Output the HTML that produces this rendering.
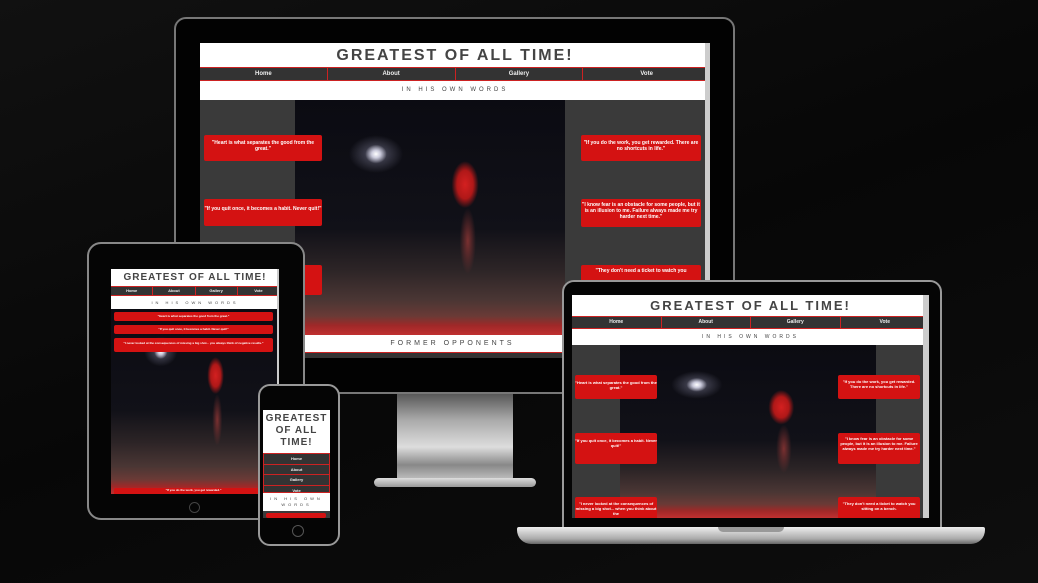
<!DOCTYPE html>
<html><head><meta charset="utf-8"><style>
*{margin:0;padding:0;box-sizing:border-box}
body{width:1038px;height:583px;background:#0b0b0c;position:relative;overflow:hidden;font-family:"Liberation Sans",sans-serif}
.a{position:absolute}
.scr{position:absolute;overflow:hidden;background:#3a3a3a}
.t{background:#fff;color:#444;font-weight:bold;text-align:center;letter-spacing:2px}
.nav{display:flex;background:#333;border-top:1px solid #c22;border-bottom:1px solid #c22}
.nav div{flex:1;color:#eee;font-weight:bold;text-align:center;border-right:1px solid #c22}
.nav div:last-child{border-right:none}
.sub{background:#fff;color:#444;text-align:center;letter-spacing:3px}
.photo{position:absolute;background:
 radial-gradient(ellipse 4% 4% at 30% 23%,#fff 0,#ccd 40%,transparent 100%),
 radial-gradient(ellipse 10% 8% at 30% 23%,rgba(160,160,190,.5) 0,transparent 100%),
 radial-gradient(ellipse 5% 10% at 63% 36%,#d42020 0,#b01818 60%,transparent 100%),
 radial-gradient(ellipse 3% 14% at 64% 60%,#7a3030 0,transparent 100%),
 linear-gradient(#0b0b12 0,#111118 55%,#2c2426 72%,#4a3634 85%,#6a3a36 92%,#a02828 96%,#c03030 100%)}
.q{position:absolute;background:#d41212;color:#fff;font-weight:bold;text-align:center;border-radius:2px}
</style></head><body>
<div class="a" style="left:0;top:0;width:1038px;height:583px;background:linear-gradient(160deg,#111 0,#070707 50%,#0e0e0e 100%)"></div>

<div class="a" style="left:397px;top:393px;width:116px;height:90px;background:linear-gradient(#555,#aaa 30%,#ddd 60%,#888 80%,#ccc);border-radius:0 0 6px 6px"></div>
<div class="a" style="left:374px;top:478px;width:162px;height:9px;background:linear-gradient(#ddd,#999);border-radius:6px"></div>
<div class="a" style="left:174px;top:17px;width:561px;height:377px;background:#020202;border:2px solid #777;border-radius:12px"></div>
<div class="scr" style="left:200px;top:43px;width:510px;height:317px;background:#000">
 <div class="t" style="height:24px;font-size:16px;line-height:25px">GREATEST OF ALL TIME!</div>
 <div class="nav" style="height:14px;font-size:6px;line-height:12px"><div>Home</div><div>About</div><div>Gallery</div><div>Vote</div></div>
 <div class="sub" style="height:19px;font-size:6px;line-height:19px">IN HIS OWN WORDS</div>
 <div class="a" style="left:0;top:57px;width:505px;height:235px;background:#3a3a3a"></div>
 <div class="photo" style="left:95px;top:57px;width:270px;height:235px"></div>
 <div class="q" style="left:4px;top:92px;width:118px;height:26px;font-size:5px;padding-top:5px">"Heart is what separates the good from the great."</div>
 <div class="q" style="left:4px;top:156px;width:118px;height:27px;font-size:5px;padding-top:7px">"If you quit once, it becomes a habit. Never quit!"</div>
 <div class="q" style="left:4px;top:222px;width:118px;height:30px"></div>
 <div class="q" style="left:381px;top:92px;width:120px;height:26px;font-size:5px;padding-top:5px">"If you do the work, you get rewarded. There are no shortcuts in life."</div>
 <div class="q" style="left:381px;top:156px;width:120px;height:28px;font-size:5px;padding-top:3px">"I know fear is an obstacle for some people, but it is an illusion to me. Failure always made me try harder next time."</div>
 <div class="q" style="left:381px;top:222px;width:120px;height:20px;font-size:5px;padding-top:3px">"They don't need a ticket to watch you</div>
 <div class="a" style="left:0;top:292px;width:505px;height:18px;background:#fff;border-bottom:1px solid #c22;font-size:7px;letter-spacing:3px;color:#444;text-align:center;line-height:18px">FORMER OPPONENTS</div>
 <div class="a" style="left:0;top:310px;width:505px;height:5px;background:#333"></div>
 <div class="a" style="left:505px;top:0;width:5px;height:317px;background:#ccc"></div>
</div>

<div class="a" style="left:87px;top:242px;width:218px;height:278px;background:#050505;border:2px solid #888;border-radius:14px"></div>
<div class="a" style="left:189px;top:502px;width:11px;height:11px;border:1px solid #444;border-radius:50%"></div>
<div class="scr" style="left:111px;top:269px;width:168px;height:225px">
 <div class="t" style="height:17px;font-size:10px;line-height:18px;letter-spacing:1px">GREATEST OF ALL TIME!</div>
 <div class="nav" style="height:10px;font-size:4px;line-height:8px"><div>Home</div><div>About</div><div>Gallery</div><div>Vote</div></div>
 <div class="sub" style="height:13px;font-size:4px;line-height:13px">IN HIS OWN WORDS</div>
 <div class="photo" style="left:0;top:40px;width:166px;height:185px"></div>
 <div class="q" style="left:3px;top:43px;width:159px;height:9px;font-size:3px;line-height:9px">"Heart is what separates the good from the great."</div>
 <div class="q" style="left:3px;top:56px;width:159px;height:9px;font-size:3px;line-height:9px">"If you quit once, it becomes a habit. Never quit!"</div>
 <div class="q" style="left:3px;top:69px;width:159px;height:14px;font-size:3px;padding-top:3px">"I never looked at the consequences of missing a big shot... you always think of negative results."</div>
 <div class="q" style="left:3px;top:219px;width:159px;height:8px;font-size:3px">"If you do the work, you get rewarded."</div>
 <div class="a" style="left:166px;top:0;width:2px;height:225px;background:#ccc"></div>
</div>

<div class="a" style="left:258px;top:384px;width:82px;height:162px;background:#050505;border:2px solid #999;border-radius:12px"></div>
<div class="a" style="left:292px;top:525px;width:12px;height:12px;border:1px solid #555;border-radius:50%"></div>
<div class="scr" style="left:263px;top:410px;width:67px;height:108px;background:#fff">
 <div class="t" style="height:43px;font-size:10px;line-height:12px;letter-spacing:1px;padding-top:3px">GREATEST OF ALL TIME!</div>
 <div class="nav" style="display:block;height:40px;font-size:4px;line-height:9.5px;border:1px solid #c22">
  <div style="border-bottom:1px solid #c22;border-right:none">Home</div><div style="border-bottom:1px solid #c22;border-right:none">About</div><div style="border-bottom:1px solid #c22;border-right:none">Gallery</div><div style="border-right:none">Vote</div></div>
 <div class="sub" style="height:18px;font-size:4px;line-height:6px;padding-top:3px">IN HIS OWN WORDS</div>
 <div class="a" style="left:0;top:101px;width:67px;height:7px;background:#3a3a3a"></div>
 <div class="q" style="left:3px;top:103px;width:60px;height:5px"></div>
</div>

<div class="a" style="left:562px;top:280px;width:380px;height:250px;background:#050505;border:2px solid #999;border-radius:12px 12px 0 0"></div>
<div class="a" style="left:517px;top:527px;width:468px;height:17px;background:linear-gradient(#eee,#aaa 70%,#666);border-radius:2px 2px 14px 14px"></div>
<div class="a" style="left:718px;top:527px;width:66px;height:5px;background:#999;border-radius:0 0 5px 5px"></div>
<div class="scr" style="left:572px;top:295px;width:357px;height:223px">
 <div class="t" style="height:21px;font-size:13px;line-height:22px">GREATEST OF ALL TIME!</div>
 <div class="nav" style="height:13px;font-size:5px;line-height:11px"><div>Home</div><div>About</div><div>Gallery</div><div>Vote</div></div>
 <div class="sub" style="height:16px;font-size:5px;line-height:16px">IN HIS OWN WORDS</div>
 <div class="photo" style="left:48px;top:50px;width:256px;height:173px"></div>
 <div class="q" style="left:3px;top:80px;width:82px;height:24px;font-size:4px;padding-top:5px">"Heart is what separates the good from the great."</div>
 <div class="q" style="left:3px;top:138px;width:82px;height:31px;font-size:4px;padding-top:5px">"If you quit once, it becomes a habit. Never quit!"</div>
 <div class="q" style="left:3px;top:202px;width:82px;height:22px;font-size:4px;padding-top:4px">"I never looked at the consequences of missing a big shot... when you think about the</div>
 <div class="q" style="left:266px;top:80px;width:82px;height:24px;font-size:4px;padding-top:4px">"If you do the work, you get rewarded. There are no shortcuts in life."</div>
 <div class="q" style="left:266px;top:138px;width:82px;height:31px;font-size:4px;padding-top:3px">"I know fear is an obstacle for some people, but it is an illusion to me. Failure always made me try harder next time."</div>
 <div class="q" style="left:266px;top:202px;width:82px;height:22px;font-size:4px;padding-top:4px">"They don't need a ticket to watch you sitting on a bench.</div>
 <div class="a" style="left:351px;top:0;width:6px;height:223px;background:#ccc"></div>
</div>
</body></html>
